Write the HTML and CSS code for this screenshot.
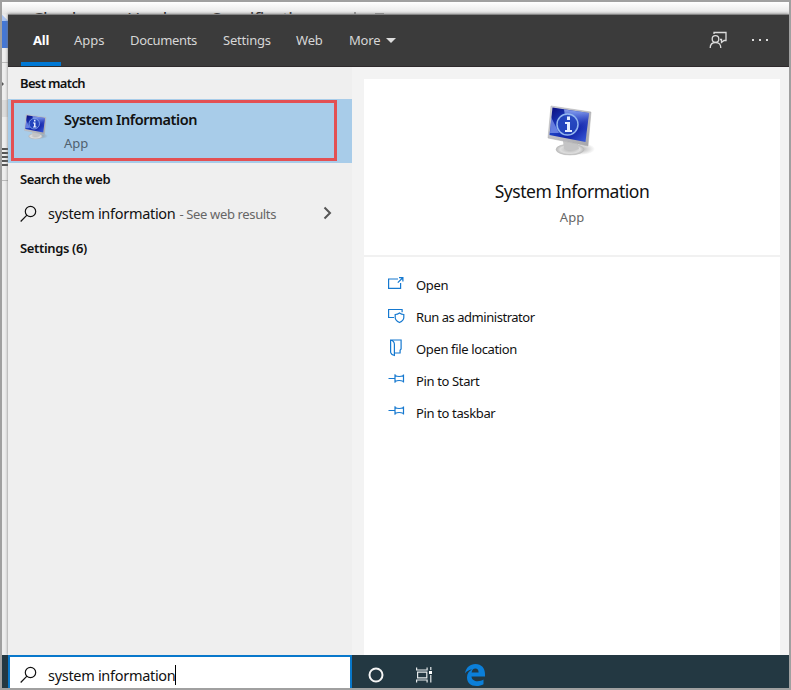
FILE: index.html
```html
<!DOCTYPE html>
<html lang="en">
<head>
<meta charset="utf-8">
<title>Search</title>
<link rel="stylesheet" href="styles.css">
</head>
<body>
<svg class="defs" width="0" height="0">
  <defs>
    <linearGradient id="screen" x1="0" y1="0" x2="1" y2="1"><stop offset="0" stop-color="#0a0a78"/><stop offset=".4" stop-color="#1c3fc4"/><stop offset=".65" stop-color="#1224a8"/><stop offset="1" stop-color="#3f62e0"/></linearGradient>
    <linearGradient id="shine" x1="0" y1="0" x2="0" y2="1"><stop offset="0" stop-color="#b4c8ff" stop-opacity=".75"/><stop offset="1" stop-color="#4060e0" stop-opacity="0"/></linearGradient>
    <linearGradient id="frame" x1="0" y1="0" x2="1" y2="1"><stop offset="0" stop-color="#d5d5dc"/><stop offset="1" stop-color="#a5a5a8"/></linearGradient>
    <radialGradient id="base"><stop offset="0" stop-color="#b5b5b5"/><stop offset=".7" stop-color="#dedede"/><stop offset="1" stop-color="#b9b9b9"/></radialGradient>
    <radialGradient id="shade"><stop offset="0" stop-color="#777" stop-opacity=".6"/><stop offset="1" stop-color="#777" stop-opacity="0"/></radialGradient>
    <symbol id="monitor" viewBox="0 0 48 52">
      <ellipse cx="33" cy="44" rx="15" ry="6" fill="url(#shade)"/>
      <ellipse cx="23" cy="44.500" rx="14" ry="5.500" fill="url(#base)" stroke="#bbb" stroke-width=".5"/>
      <path d="M16 36l15 3 1 5q-8 3-15 0z" fill="#c4c4c5"/>
      <path d="M4 1L44 7 41 41 1 33z" fill="url(#frame)" stroke="#aaa" stroke-width=".5"/>
      <path d="M5.500 2.500L42 8 38.500 37 2.500 30z" fill="url(#screen)"/>
      <path d="M17 4.500L42 8 40 24Q28 26 19 17z" fill="url(#shine)"/>
      <path d="M4 12L12 28 3 28z" fill="#8fa5f5" opacity=".65"/>
      <circle cx="20.500" cy="19.500" r="10.500" fill="#2447bd" fill-opacity=".85" stroke="#93b6ef" stroke-width="1.500"/>
      <path d="M20 11.500h3v3.500h-3zM18 17h5v8h2v2h-7v-2h2v-6h-2z" fill="#e7efff"/>
    </symbol>
    <symbol id="search" viewBox="0 0 18 18"><circle cx="10.500" cy="6.500" r="5.200" fill="none" stroke="currentColor" stroke-width="1.200"/><path d="M6.900 10.200L.7 16.500" stroke="currentColor" stroke-width="1.200"/></symbol>
    <symbol id="pin" viewBox="0 0 18 18"><path d="M.5 7.500h6M7 3.200v8.600M7 4.500q4 2 8.500 0M7 10.500q4-2 8.500 0M15.500 3.500v8" fill="none" stroke="currentColor" stroke-width="1.200"/></symbol>
  </defs>
</svg>
<div class="shot">
  <div class="document">
    <div class="title-strip"><div class="doc-title">Check your Hardware Specifications</div><i class="doc-star"></i><i class="doc-folder"></i></div>
    <div class="doc-blue"></div>
    <div class="doc-menu"></div>
    <div class="doc-lines"></div>
  </div>
  <main class="panel">
    <nav class="tabs">
      <span class="tab active">All</span><span class="tab apps">Apps</span><span class="tab docs">Documents</span><span class="tab settings">Settings</span><span class="tab web">Web</span><span class="tab more">More</span><i class="caret"></i>
      <svg class="feedback" width="18" height="18" viewBox="0 0 18 18" fill="none" stroke="#ddd" stroke-width="1.300"><circle cx="6.500" cy="8" r="3.300"/><path d="M1.200 17q0-5.500 5.300-5.500t5.300 5.500M5 3V1.500h12v8h-2l-2.500 2v-3H11"/></svg>
      <span class="dots"><i></i><i></i><i></i></span>
    </nav>
    <div class="content">
      <section class="results">
        <h2 class="heading best">Best match</h2>
        <div class="match">
          <div class="match-box">
            <svg class="match-icon" width="24" height="26"><use href="#monitor"/></svg>
            <div><div class="match-name">System Information</div><div class="match-kind">App</div></div>
          </div>
        </div>
        <h2 class="heading searchweb">Search the web</h2>
        <div class="web-row">
          <svg width="18" height="18"><use href="#search"/></svg>
          <span class="query">system information</span><span class="hint">- See web results</span>
          <svg class="chevron" width="9" height="14" viewBox="0 0 9 14"><path d="M1.500 1.500L7 7l-5.500 5.500" fill="none" stroke="#555" stroke-width="2"/></svg>
        </div>
        <h2 class="heading count">Settings (6)</h2>
      </section>
      <section class="details">
        <div class="card">
          <header class="hero">
            <svg width="48" height="52"><use href="#monitor"/></svg>
            <h1>System Information</h1>
            <p>App</p>
          </header>
          <ul class="actions">
            <li><svg viewBox="0 0 18 18"><path d="M10 4H.6v9.400h12V8M9.800 7.700L14.500 3M11 2.600h3.900v3.900"/></svg><span>Open</span></li>
            <li><svg viewBox="0 0 18 18"><path d="M6 10.500H.6v-8h13.500v2.700M11.500 6q2 1.500 4.300 1.500v3q0 3-4.300 5-4.300-2-4.300-5v-3Q9.500 7.500 11.500 6z"/></svg><span class="admin">Run as administrator</span></li>
            <li><svg viewBox="0 0 18 18"><path d="M2.600 13.500V1h10.500v9l-1 1.200v2.800H7M2.600 1q3.800 1 3.800 4.500v11Q3.500 16 2.600 13.500"/></svg><span>Open file location</span></li>
            <li><svg><use href="#pin"/></svg><span>Pin to Start</span></li>
            <li><svg><use href="#pin"/></svg><span>Pin to taskbar</span></li>
          </ul>
        </div>
      </section>
    </div>
  </main>
  <footer class="taskbar">
    <div class="searchbox"><svg width="18" height="18"><use href="#search"/></svg><span class="query">system information</span><i class="cursor"></i></div>
    <svg class="cortana" width="16" height="16" viewBox="0 0 16 16"><circle cx="8" cy="8" r="6.500" fill="none" stroke="#f5f5f5" stroke-width="2"/></svg>
    <svg class="taskview" width="17" height="16" viewBox="0 0 17 16" fill="none" stroke="#e6eaeb" stroke-width="1.200"><path d="M.6.500V3h10.500V.5M.6 15.500V13h10.500v2.500M1.600 5.200h9.200v5.600H1.600zM14.800 0v3M14.800 8v7.500"/><path d="M13 4h3v3h-3z" fill="#fff" stroke="none"/></svg>
    <svg class="edge" width="20" height="22" viewBox="0 0 20 22"><path d="M0 9.500C1 3.500 5 0 10.500 0 16.500 0 20 4.200 20 10v2.500H6.500c.3 3.400 3 4.700 6 4.700 2.500 0 4.500-.7 6-1.600v4.600c-2 1.200-4.300 1.800-7 1.800C5.700 22 2 18.700 2 13.500c0-3.800 2-6.700 5.200-8C4.300 5.700 1.700 7 0 9.500zm6.600-1h7C13.600 6 12.500 4.600 10.300 4.600 8.300 4.600 7 6 6.600 8.500z" fill="#0b7fd9"/></svg>
  </footer>
</div>
</body>
</html>
```
FILE: styles.css
```css
* { box-sizing: border-box; }
body { margin: 0; font-family: "Noto Sans", "Open Sans", sans-serif; font-size: 13px; color: #111; }
h1, h2, p, ul { margin: 0; padding: 0; }
.defs { position: absolute; }
svg { flex: none; display: block; }
span, h1, h2, .match-name { white-space: nowrap; }
.shot { position: relative; width: 791px; height: 690px; overflow: hidden; border: 2px solid #a0a0a0; background: #f1f1f1; display: flex; flex-direction: column; padding-top: 12px; }
.document { position: absolute; inset: 0; background: linear-gradient(#fff, #e5e5e5 12px, #eee 13px); }
.title-strip { position: relative; height: 13px; overflow: hidden; }
.doc-title { position: absolute; left: 30px; top: 5px; font-size: 18px; line-height: 24px; letter-spacing: -.36px; color: #222; white-space: nowrap; }
.doc-star { position: absolute; left: 352px; top: 10px; width: 2px; height: 2px; background: #999; }
.doc-folder { position: absolute; left: 373px; top: 11px; width: 9px; height: 1px; background: #999; }
.doc-blue { position: absolute; left: 0; top: 12px; width: 6px; height: 34px; background: linear-gradient(45deg, #a9c3f2 4px, transparent 5px) 0 0 / 6px 7px no-repeat, linear-gradient(#4477d5, #4477d5) 0 7px / 6px 27px no-repeat; }
.doc-menu { position: absolute; left: 0; top: 60px; width: 6px; height: 40px; border-top: 1px solid #bbb; border-bottom: 1px solid #bbb; }
.doc-menu::after { content: ""; position: absolute; left: 0; top: 19px; border: 2px solid transparent; border-left-color: #555; border-right: 0; }
.doc-lines { position: absolute; left: 0; top: 98px; width: 6px; height: 81px; border-bottom: 1px solid #bbb; background: repeating-linear-gradient(#555 0 2px, #eee 2px 4px) 0 48px / 6px 18px no-repeat, linear-gradient(#dcdcdc, #dcdcdc) 0 0 / 6px 17px no-repeat; }
.panel { position: relative; margin-left: 6px; width: 781px; height: 641px; display: flex; flex-direction: column; box-shadow: 0 0 3px #777; }
.tabs { height: 53px; flex: none; background: #3b3b3b; border-top: 1px solid #858585; border-bottom: 1px solid #2e2a2c; display: flex; align-items: center; color: #d6d6d6; padding-left: 13px; }
.tab { height: 51px; line-height: 51px; letter-spacing: -.2px; }
.active { width: 40px; text-align: center; font-weight: 700; color: #fff; border-bottom: 4px solid #0078d4; }
.apps { margin-left: 13px; width: 56px; letter-spacing: 0; }
.docs { width: 93px; letter-spacing: -.35px; }
.settings { width: 73px; }
.web { width: 53px; }
.more { width: 37px; }
.caret { border: 5px solid transparent; border-top-color: #ddd; border-bottom: 0; }
.feedback { margin-left: auto; margin-right: 25px; margin-top: -1px; }
.dots { display: flex; gap: 5px; margin-right: 21px; margin-top: -1px; }
.dots i { width: 2px; height: 2px; background: #ddd; }
.content { flex: 1; display: flex; min-height: 0; }
.results { width: 344px; background: #efefef; }
.heading { margin-left: 12px; font-size: 13px; font-weight: 600; line-height: 32px; height: 32px; letter-spacing: -.5px; }
.best { letter-spacing: -.65px; }
.count { letter-spacing: -.35px; }
.match { height: 64px; background: #a8cce9; padding: 1px 0 0 3px; }
.match-box { width: 326px; height: 61px; border: 3px solid #e35053; display: flex; padding: 9px 0 0 10px; gap: 16px; }
.match-icon { margin-top: 2px; }
.match-name { font-size: 14.5px; line-height: 20px; font-weight: 600; margin-top: -3px; letter-spacing: -.44px; }
.match-kind { color: #50616f; line-height: 18px; margin-top: 5px; }
.web-row { display: flex; align-items: center; height: 37px; padding-left: 12px; }
.query { font-size: 14.5px; margin-left: 10px; margin-top: -1px; letter-spacing: -.3px; }
.hint { color: #666; margin-left: 4px; letter-spacing: -.36px; }
.chevron { margin-left: auto; margin-right: 20px; margin-top: -2px; }
.details { flex: 1; background: #f3f3f3; padding: 12px 9px 0 12px; }
.card { background: #fff; height: 100%; }
.hero { height: 178px; border-bottom: 2px solid #f1f1f1; display: flex; flex-direction: column; align-items: center; padding-top: 26px; }
.hero svg { margin-right: 2px; }
.hero h1 { font-size: 17.5px; font-weight: 400; line-height: 26px; margin-top: 21px; letter-spacing: -.47px; }
.hero p { color: #666; line-height: 18px; margin-top: 4px; }
.actions { list-style: none; padding: 12px 0 0 24px; letter-spacing: -.36px; }
.actions li { height: 32px; display: flex; align-items: center; gap: 10px; }
.actions svg { width: 18px; height: 18px; margin-top: -2px; fill: none; stroke: #1679d0; stroke-width: 1.2; color: #1679d0; }
.admin { letter-spacing: -.46px; }
.taskbar { position: relative; height: 33px; background: #233842; display: flex; align-items: flex-start; padding-left: 6px; flex: none; }
.searchbox { width: 344px; height: 33px; border: 2px solid #0878cb; border-bottom: 0; background: #fff; display: flex; align-items: center; padding: 6px 0 0 10px; }
.searchbox svg { margin-top: -1px; }
.cursor { width: 1px; height: 20px; background: #000; margin-top: -2px; }
.cortana { margin: 12px 0 0 16px; }
.taskview { margin: 12px 0 0 32px; }
.edge { margin: 9px 0 0 32px; }
```
